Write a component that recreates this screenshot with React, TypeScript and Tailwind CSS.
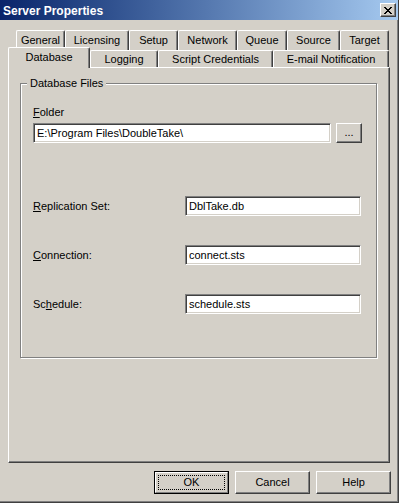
import React from 'react';

const FONT = "font-['Liberation_Sans',Arial,sans-serif]";

const ROW_BACK = [
  { label: 'General', w: 'w-[49px]' },
  { label: 'Licensing', w: 'w-[64px]' },
  { label: 'Setup', w: 'w-[49px]' },
  { label: 'Network', w: 'w-[59px]' },
  { label: 'Queue', w: 'w-[50px]' },
  { label: 'Source', w: 'w-[53px]' },
  { label: 'Target', w: 'w-[49px]' },
];

const ROW_FRONT = [
  { label: 'Logging', w: 'w-[68px]' },
  { label: 'Script Credentials', w: 'w-[115px]' },
  { label: 'E-mail Notification', w: 'w-[116px]' },
];

const tabEdge =
  'rounded-t-[2px] border-l border-t border-r border-l-white border-t-white border-r-[#404040] bg-[#d4d0c8] shadow-[inset_-1px_0_0_#808080]';

const sunken =
  'border border-t-[#808080] border-l-[#808080] border-b-white border-r-white bg-white shadow-[inset_1px_1px_0_#404040,inset_-1px_-1px_0_#d4d0c8]';

const raised =
  'border border-t-white border-l-white border-b-[#404040] border-r-[#404040] bg-[#d4d0c8] shadow-[inset_-1px_-1px_0_#808080]';

const CloseGlyph = () => (
  <svg width="8" height="7" viewBox="0 0 8 7" shapeRendering="crispEdges">
    <path
      d="M0 0h2v1H0zM6 0h2v1H6zM1 1h2v1H1zM5 1h2v1H5zM2 2h4v1H2zM3 3h2v1H3zM2 4h4v1H2zM1 5h2v1H1zM5 5h2v1H5zM0 6h2v1H0zM6 6h2v1H6z"
      fill="#000"
    />
  </svg>
);

const Field: React.FC<{ value: string; width: string }> = ({ value, width }) => (
  <div className={`${width} h-[20px] ${sunken} flex items-center pl-[3px] text-[11px] leading-[13px] text-black whitespace-nowrap overflow-hidden`}>
    {value}
  </div>
);

const Row: React.FC<{ pre: string; key1: string; post: string; value: string; top: string }> = ({ pre, key1, post, value, top }) => (
  <div className={`flex items-center ${top}`}>
    <div className="w-[152px] text-[11px] leading-[13px]">
      {pre}
      <span className="underline underline-offset-[1px]">{key1}</span>
      {post}
    </div>
    <Field value={value} width="w-[176px]" />
  </div>
);

const PushButton: React.FC<{ label: string }> = ({ label }) => (
  <div className={`w-[75px] h-[23px] ${raised} flex items-center justify-center text-[11px] leading-[13px]`}>
    {label}
  </div>
);

export default function App() {
  return (
    <div
      className={`${FONT} w-[399px] h-[503px] bg-[#d4d0c8] text-black flex flex-col border-r border-b border-r-[#404040] border-b-[#404040] shadow-[inset_-1px_-1px_0_#808080] overflow-hidden`}
    >
      {/* caption */}
      <div className="h-[20px] flex items-center justify-between pl-[3px] pr-[2px] bg-gradient-to-r from-[#0a246a] to-[#a6caf0]">
        <span className="text-white font-bold text-[12px] leading-[14px] pt-[1px]">Server Properties</span>
        <div className={`w-[16px] h-[14px] ${raised} flex items-center justify-center`}>
          <CloseGlyph />
        </div>
      </div>

      {/* tab strip */}
      <div className="mt-[10px] ml-[8px] flex flex-col text-[11px] leading-[13px]">
        <div className="ml-[8px] flex h-[20px]">
          {ROW_BACK.map((t) => (
            <div key={t.label} className={`${t.w} h-[20px] ${tabEdge} flex items-center justify-center`}>
              {t.label}
            </div>
          ))}
        </div>
        <div className="-mt-[3px] flex items-end h-[20px]">
          <div className={`relative z-10 w-[82px] h-[21px] -mb-px ${tabEdge} flex items-center justify-center pb-[2px]`}>
            Database
          </div>
          {ROW_FRONT.map((t) => (
            <div key={t.label} className={`relative ${t.w} h-[17px] ${tabEdge} flex items-center justify-center`}>
              {t.label}
            </div>
          ))}
        </div>
      </div>

      {/* tab page */}
      <div className="ml-[8px] w-[382px] h-[396px] border-l border-t border-r border-b border-l-white border-t-white border-r-[#404040] border-b-[#404040] shadow-[inset_-1px_-1px_0_#808080]">
        <div className="relative ml-[11px] mt-[15px] w-[357px] h-[275px] border border-[#808080] shadow-[1px_1px_0_#fff,inset_1px_1px_0_#fff] pl-[12px] pt-[22px]">
          <span className="absolute -top-[7px] left-[6px] bg-[#d4d0c8] px-[3px] text-[11px] leading-[13px]">
            Database Files
          </span>

          <div className="h-[13px] text-[11px] leading-[13px]">
            <span className="underline underline-offset-[1px]">F</span>older
          </div>
          <div className="mt-[4px] flex gap-[5px]">
            <Field value="E:\Program Files\DoubleTake\" width="w-[298px]" />
            <div className={`w-[26px] h-[20px] ${raised} flex items-end justify-center pb-[4px] text-[11px] leading-[11px]`}>
              ...
            </div>
          </div>

          <Row pre="" key1="R" post="eplication Set:" value="DblTake.db" top="mt-[53px]" />
          <Row pre="" key1="C" post="onnection:" value="connect.sts" top="mt-[29px]" />
          <Row pre="Sc" key1="h" post="edule:" value="schedule.sts" top="mt-[29px]" />
        </div>
      </div>

      {/* dialog buttons */}
      <div className="mt-[8px] flex justify-end gap-[6px] pr-[7px]">
        <div className="w-[75px] h-[23px] border border-black flex">
          <div className="flex-1 flex border border-t-white border-l-white border-b-[#808080] border-r-[#808080] bg-[#d4d0c8]">
            <div className="flex-1 m-[2px] border border-dotted border-black flex items-center justify-center text-[11px] leading-[13px]">
              OK
            </div>
          </div>
        </div>
        <PushButton label="Cancel" />
        <PushButton label="Help" />
      </div>
    </div>
  );
}
